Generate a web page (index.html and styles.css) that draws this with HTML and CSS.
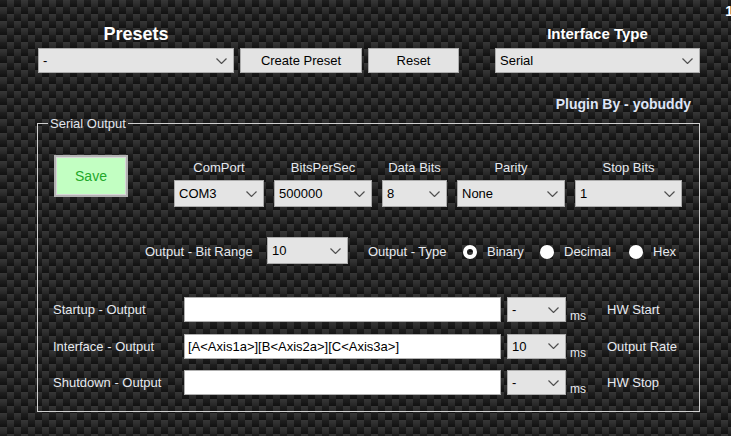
FILE: index.html
```html
<!DOCTYPE html>
<html>
<head>
<meta charset="utf-8">
<link rel="stylesheet" href="styles.css">
</head>
<body>
<div class="app">
  <span class="corner">1</span>
  <header class="top">
    <div class="col presets">
      <div class="title title-lg">Presets</div>
      <div class="combo"><span>-</span><svg class="chev" width="11" height="6" viewBox="0 0 11 6"><path d="M0.5 0.5 L5.5 5.5 L10.5 0.5" fill="none" stroke="#505050" stroke-width="1.2"/></svg></div>
    </div>
    <button class="btn btn-create">Create Preset</button>
    <button class="btn btn-reset">Reset</button>
    <div class="col iface">
      <div class="title title-md">Interface Type</div>
      <div class="combo"><span>Serial</span><svg class="chev" width="11" height="6" viewBox="0 0 11 6"><path d="M0.5 0.5 L5.5 5.5 L10.5 0.5" fill="none" stroke="#505050" stroke-width="1.2"/></svg></div>
    </div>
  </header>
  <div class="credit">Plugin By - yobuddy</div>
  <fieldset class="group">
    <legend>Serial Output</legend>
    <div class="row-config">
      <button class="save">Save</button>
      <div class="fields">
        <div class="field f-com"><div class="flabel">ComPort</div><div class="combo tall"><span>COM3</span><svg class="chev" width="11" height="6" viewBox="0 0 11 6"><path d="M0.5 0.5 L5.5 5.5 L10.5 0.5" fill="none" stroke="#505050" stroke-width="1.2"/></svg></div></div>
        <div class="field f-bps"><div class="flabel">BitsPerSec</div><div class="combo tall"><span>500000</span><svg class="chev" width="11" height="6" viewBox="0 0 11 6"><path d="M0.5 0.5 L5.5 5.5 L10.5 0.5" fill="none" stroke="#505050" stroke-width="1.2"/></svg></div></div>
        <div class="field f-data"><div class="flabel">Data Bits</div><div class="combo tall"><span>8</span><svg class="chev" width="11" height="6" viewBox="0 0 11 6"><path d="M0.5 0.5 L5.5 5.5 L10.5 0.5" fill="none" stroke="#505050" stroke-width="1.2"/></svg></div></div>
        <div class="field f-parity"><div class="flabel">Parity</div><div class="combo tall"><span>None</span><svg class="chev" width="11" height="6" viewBox="0 0 11 6"><path d="M0.5 0.5 L5.5 5.5 L10.5 0.5" fill="none" stroke="#505050" stroke-width="1.2"/></svg></div></div>
        <div class="field f-stop"><div class="flabel">Stop Bits</div><div class="combo tall"><span>1</span><svg class="chev" width="11" height="6" viewBox="0 0 11 6"><path d="M0.5 0.5 L5.5 5.5 L10.5 0.5" fill="none" stroke="#505050" stroke-width="1.2"/></svg></div></div>
      </div>
    </div>
    <div class="row-output">
      <span class="lbl lbl-range">Output - Bit Range</span>
      <div class="combo tall c-range"><span>10</span><svg class="chev" width="11" height="6" viewBox="0 0 11 6"><path d="M0.5 0.5 L5.5 5.5 L10.5 0.5" fill="none" stroke="#505050" stroke-width="1.2"/></svg></div>
      <span class="lbl lbl-type">Output - Type</span>
      <span class="radio r-bin"><span class="dot checked"></span><span class="lbl">Binary</span></span>
      <span class="radio r-dec"><span class="dot"></span><span class="lbl">Decimal</span></span>
      <span class="radio r-hex"><span class="dot"></span><span class="lbl">Hex</span></span>
    </div>
    <div class="io-grid">
      <span class="lbl">Startup - Output</span>
      <div class="text-in"></div>
      <div class="combo"><span>-</span><svg class="chev" width="11" height="6" viewBox="0 0 11 6"><path d="M0.5 0.5 L5.5 5.5 L10.5 0.5" fill="none" stroke="#505050" stroke-width="1.2"/></svg></div>
      <span class="ms">ms</span>
      <span class="lbl">HW Start</span>

      <span class="lbl">Interface - Output</span>
      <div class="text-in">[A&lt;Axis1a&gt;][B&lt;Axis2a&gt;][C&lt;Axis3a&gt;]</div>
      <div class="combo"><span>10</span><svg class="chev" width="11" height="6" viewBox="0 0 11 6"><path d="M0.5 0.5 L5.5 5.5 L10.5 0.5" fill="none" stroke="#505050" stroke-width="1.2"/></svg></div>
      <span class="ms">ms</span>
      <span class="lbl">Output Rate</span>

      <span class="lbl">Shutdown - Output</span>
      <div class="text-in"></div>
      <div class="combo"><span>-</span><svg class="chev" width="11" height="6" viewBox="0 0 11 6"><path d="M0.5 0.5 L5.5 5.5 L10.5 0.5" fill="none" stroke="#505050" stroke-width="1.2"/></svg></div>
      <span class="ms">ms</span>
      <span class="lbl">HW Stop</span>
    </div>
  </fieldset>
</div>
</body>
</html>
```
FILE: styles.css
```css
* { box-sizing: border-box; }
html, body { margin: 0; padding: 0; }
body {
  width: 731px;
  height: 436px;
  overflow: hidden;
  font-family: "Liberation Sans", Arial, sans-serif;
  font-size: 13px;
  color: #e6e9ef;
  background:
    linear-gradient(180deg, rgba(255,255,255,0.05), rgba(0,0,0,0.18)) 0 0 / 7px 7px,
    repeating-conic-gradient(#2d2d2d 0 25%, #141414 0 50%) 0 0 / 14px 14px;
}
.app { position: relative; width: 731px; height: 436px; }
.corner {
  position: absolute; right: -2px; top: 3px;
  font-weight: bold; font-size: 14px; color: #fff;
}
.top {
  display: flex;
  align-items: flex-end;
  padding: 24px 0 0 38px;
}
.col { display: flex; flex-direction: column; }
.presets { width: 196px; }
.iface { width: 205px; margin-left: 36px; }
.title {
  text-align: center;
  font-weight: bold;
  color: #fff;
  line-height: 20px;
  margin-bottom: 4px;
}
.title-lg { font-size: 18px; }
.title-md { font-size: 15px; }
.combo {
  display: flex;
  align-items: center;
  justify-content: space-between;
  height: 25px;
  padding: 0 6px 0 4px;
  background: #e4e4e4;
  border: 1px solid #acacac;
  color: #000;
  font-size: 13px;
}
.combo.tall { height: 27px; }
.chev { flex: none; }
.btn {
  height: 25px;
  margin-left: 6px;
  background: #e3e3e3;
  border: 1px solid #acacac;
  font-family: inherit;
  font-size: 13px;
  color: #000;
  padding: 0;
}
.btn-create { width: 122px; }
.btn-reset { width: 91px; }
.credit {
  margin-top: 23px;
  padding-right: 40px;
  text-align: right;
  font-weight: bold;
  font-size: 14px;
  line-height: 16px;
  color: #dfe6f7;
}
.group {
  margin: 4px 0 0 37px;
  width: 663px;
  min-width: 0;
  border: 1px solid #cfcfcf;
  padding: 0 0 16px 0;
}
.group legend {
  margin-left: 10px;
  padding: 0 2px;
  font-size: 13px;
  line-height: 15px;
  color: #e2e5ec;
}
.row-config {
  display: flex;
  align-items: flex-start;
  margin-top: 24px;
  padding-left: 16px;
}
.save {
  width: 74px;
  height: 42px;
  background: #c2ffc2;
  border: 2px solid #b3b3b3;
  box-shadow: inset 0 0 0 1px #d8d8d8;
  color: #22a82a;
  font-family: inherit;
  font-size: 14px;
  padding: 0;
}
.fields {
  display: flex;
  gap: 10px;
  margin-left: 46px;
  margin-top: 5px;
}
.field { display: flex; flex-direction: column; }
.flabel { text-align: center; line-height: 15px; margin-bottom: 5px; }
.f-com { width: 90px; }
.f-bps { width: 98px; }
.f-data { width: 65px; }
.f-parity { width: 108px; }
.f-stop { width: 107px; }
.row-output {
  display: flex;
  align-items: center;
  margin-top: 30px;
  padding-left: 107px;
  height: 27px;
}
.lbl { white-space: nowrap; }
.row-output > .lbl, .radio { padding-top: 2px; }
.lbl-range { width: 122px; }
.c-range { width: 81px; }
.lbl-type { width: 95px; margin-left: 20px; }
.radio { display: flex; align-items: center; gap: 10px; }
.r-bin { width: 77px; }
.r-dec { width: 89px; }
.dot {
  width: 14px; height: 14px;
  border-radius: 50%;
  background: #fff;
  flex: none;
}
.dot.checked { background: transparent; border: 4px solid #fff; }
.io-grid {
  display: grid;
  grid-template-columns: 131px 323px 59px 41px auto;
  grid-auto-rows: 25px;
  row-gap: 11.5px;
  align-items: center;
  margin-top: 33px;
  padding-left: 15px;
}
.text-in {
  width: 317px;
  height: 25px;
  background: #fff;
  border: 1px solid #b0b0b0;
  color: #000;
  padding-left: 3px;
  line-height: 23px;
  font-size: 13px;
  white-space: nowrap;
}
.ms {
  align-self: end;
  font-size: 12px;
  line-height: 14px;
  padding-left: 4px;
  margin-bottom: -1px;
}
```
